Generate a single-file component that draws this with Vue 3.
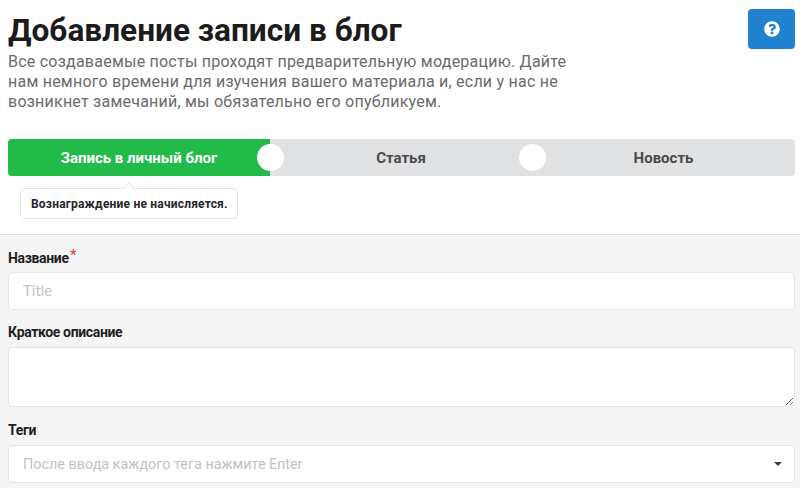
<script setup>
const steps = [
  { label: 'Запись в личный блог', active: true },
  { label: 'Статья', active: false },
  { label: 'Новость', active: false }
]
</script>

<template>
  <div class="page">
    <header class="head">
      <div class="intro">
        <h1>Добавление записи в блог</h1>
        <p>Все создаваемые посты проходят предварительную модерацию. Дайте нам немного времени для изучения вашего материала и, если у нас не возникнет замечаний, мы обязательно его опубликуем.</p>
      </div>
      <button class="help" type="button" aria-label="Помощь">
        <svg width="16" height="16" viewBox="0 0 512 512"><path fill="#fff" d="M504 256c0 137-111 248-248 248S8 393 8 256 119 8 256 8s248 111 248 248zM262.700 90c-54.500 0-89.300 23-116.500 63.800-3.500 5.300-2.300 12.400 2.800 16.300l34.700 26.300c5.200 3.900 12.600 3 16.700-2.100 17.900-22.700 30.100-35.800 57.300-35.800 20.400 0 45.700 13.100 45.700 33 0 15-12.400 22.700-32.600 34-23.600 13.200-54.800 29.700-54.800 70.900V300c0 6.600 5.400 12 12 12h56c6.600 0 12-5.400 12-12v-1.300c0-28.600 83.500-29.800 83.500-107.200 0-58.300-60.500-102.500-117.800-102.500zM256 338c-25.400 0-46 20.600-46 46 0 25.400 20.600 46 46 46s46-20.600 46-46c0-25.400-20.600-46-46-46z"/></svg>
      </button>
    </header>

    <div class="steps">
      <div v-for="(s, i) in steps" :key="s.label" class="step" :class="{ on: s.active }">
        <span>{{ s.label }}</span>
        <i v-if="i < 2" class="knob"></i>
      </div>
    </div>

    <div class="note-wrap">
      <div class="note">Вознаграждение не начисляется.</div>
    </div>

    <form class="form">
      <label class="lbl">Название<em>*</em></label>
      <input class="field one" placeholder="Title" />

      <label class="lbl second">Краткое описание</label>
      <textarea class="field area"></textarea>

      <label class="lbl third">Теги</label>
      <div class="field select">
        <span>После ввода каждого тега нажмите Enter</span>
        <b class="caret"></b>
      </div>
    </form>
  </div>
</template>

<style>
html, body { margin: 0; background: #fff; overflow: hidden; }
</style>

<style scoped>
.page {
  width: 800px;
  height: 488px;
  overflow: hidden;
  font-family: Roboto, "Liberation Sans", sans-serif;
  background: #fff;
}
.head {
  display: flex;
  justify-content: space-between;
  align-items: flex-start;
  padding: 9px 5px 0 8px;
}
.intro { width: 580px; }
h1 {
  margin: 0;
  font-size: 31.6px;
  line-height: 43px;
  font-weight: 700;
  color: #1c1c1c;
}
p {
  margin: 0;
  font-size: 16px;
  line-height: 20px;
  letter-spacing: 0.23px;
  color: #6b6b6b;
  width: 575px;
}
.help {
  width: 47px;
  height: 40px;
  border: 0;
  padding: 0;
  border-radius: 4px;
  background: #2183cf;
  display: flex;
  align-items: center;
  justify-content: center;
}
.steps {
  display: grid;
  grid-template-columns: 262px 262px 1fr;
  margin: 27px 5px 0 8px;
  height: 37px;
  background: #e0e1e3;
  border-radius: 4px;
  overflow: hidden;
}
.step {
  position: relative;
  display: flex;
  align-items: center;
  justify-content: center;
  font-size: 15px;
  font-weight: 700;
  color: #4a4a4a;
}
.step.on { background: #22bb4a; color: #fff; }
.knob {
  position: absolute;
  right: -14px;
  top: 5px;
  width: 27px;
  height: 27px;
  border-radius: 50%;
  background: #fff;
  z-index: 1;
}
.note-wrap { padding: 12px 0 15px 20px; }
.note {
  position: relative;
  display: inline-block;
  box-sizing: border-box;
  height: 31px;
  line-height: 30px;
  padding: 0 9px 0 10px;
  border: 1px solid #e4e4e4;
  border-radius: 4px;
  background: #fff;
  font-size: 12px;
  font-weight: 700;
  letter-spacing: 0.2px;
  color: #26262c;
}
.note::before {
  content: "";
  position: absolute;
  left: 103px;
  top: -5px;
  width: 8px;
  height: 8px;
  background: #fff;
  border-left: 1px solid #e4e4e4;
  border-top: 1px solid #e4e4e4;
  transform: rotate(45deg);
}
.form {
  border-top: 1px solid #dcdcdc;
  background: #f5f5f5;
  padding: 14px 5px 0 8px;
  height: 260px;
  display: flex;
  flex-direction: column;
  align-items: stretch;
}
.lbl {
  position: relative;
  font-size: 14px;
  line-height: 18px;
  font-weight: 700;
  letter-spacing: -0.35px;
  color: #1e1e1e;
  margin-bottom: 5px;
}
.lbl em {
  position: absolute;
  left: 62px;
  top: -3px;
  font-style: normal;
  font-size: 15px;
  font-weight: 400;
  color: #e0323c;
}
.second { margin-top: 13px; margin-bottom: 6px; }
.third { margin-top: 14px; margin-bottom: 6px; }
.field {
  box-sizing: border-box;
  display: block;
  width: 100%;
  border: 1px solid #e6e6e6;
  border-radius: 4px;
  background: #fff;
  padding: 0 14px;
  font-family: inherit;
  font-size: 14.4px;
  outline: none;
}
.one { height: 38px; flex: none; }
.one::placeholder { color: #c4c4c4; font-family: Lato, sans-serif; font-size: 15px; }
.area { height: 60px; flex: none; resize: vertical; }
.select {
  height: 38px;
  flex: none;
  display: flex;
  align-items: center;
  justify-content: space-between;
  color: #c2c2c2;
}
.caret {
  width: 0;
  height: 0;
  margin-right: -2px;
  border-left: 4px solid transparent;
  border-right: 4px solid transparent;
  border-top: 4px solid #3c3c3c;
}
</style>
